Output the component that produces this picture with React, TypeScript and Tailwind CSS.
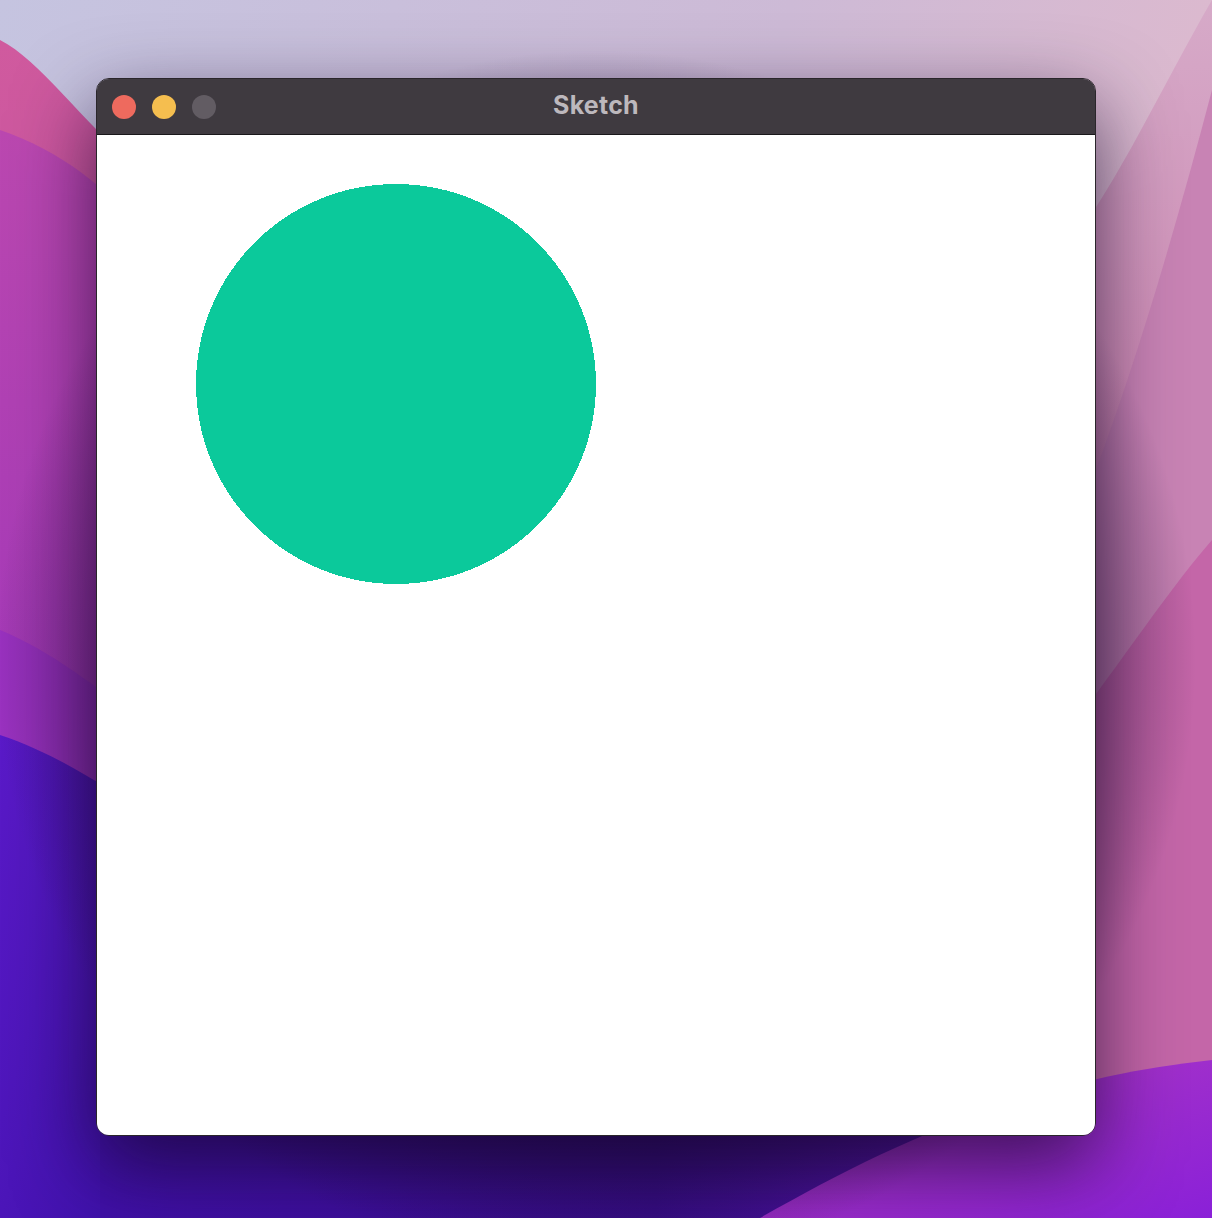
export default function App() {
  return (
    <div className="relative w-[1212px] h-[1218px] overflow-hidden bg-[#c6c3df]">
      {/* Wallpaper */}
      <svg className="absolute inset-0" width="1212" height="1218" viewBox="0 0 1212 1218">
        <defs>
          <linearGradient id="sky" x1="0" y1="0" x2="1" y2="0.3">
            <stop offset="0" stopColor="#c5c4e0" />
            <stop offset="0.6" stopColor="#cdbad6" />
            <stop offset="1" stopColor="#dfb9cd" />
          </linearGradient>
          <linearGradient id="left1" x1="0" y1="0" x2="0" y2="1">
            <stop offset="0" stopColor="#d05a9e" />
            <stop offset="1" stopColor="#b445ad" />
          </linearGradient>
          <linearGradient id="left2" x1="0" y1="0" x2="0" y2="1">
            <stop offset="0" stopColor="#bb48b0" />
            <stop offset="1" stopColor="#8f2cc0" />
          </linearGradient>
          <linearGradient id="left3" x1="0" y1="0" x2="1" y2="1">
            <stop offset="0" stopColor="#5a1ac8" />
            <stop offset="1" stopColor="#3c10a8" />
          </linearGradient>
          <linearGradient id="bottom" x1="0" y1="0" x2="1" y2="0">
            <stop offset="0" stopColor="#4010a8" />
            <stop offset="0.5" stopColor="#3a0e90" />
            <stop offset="1" stopColor="#6a18b8" />
          </linearGradient>
          <linearGradient id="right1" x1="0" y1="0" x2="0" y2="1">
            <stop offset="0" stopColor="#d6aac8" />
            <stop offset="0.5" stopColor="#cc7cac" />
            <stop offset="1" stopColor="#b847b6" />
          </linearGradient>
          <linearGradient id="right2" x1="0" y1="0" x2="1" y2="1">
            <stop offset="0" stopColor="#b23cc0" />
            <stop offset="1" stopColor="#8a20d8" />
          </linearGradient>
          <radialGradient id="shade" cx="0.5" cy="0.5" r="0.5">
            <stop offset="0.6" stopColor="#1a0830" stopOpacity="0.7" />
            <stop offset="1" stopColor="#1a0830" stopOpacity="0" />
          </radialGradient>
        </defs>
        <rect width="1212" height="1218" fill="url(#sky)" />
        <path d="M0 40 C40 60 80 120 140 170 L140 1218 L0 1218 Z" fill="url(#left1)" />
        <path d="M0 130 C60 150 110 190 140 230 L140 1218 L0 1218 Z" fill="url(#left2)" />
        <path d="M0 630 C50 650 100 690 140 720 L140 1218 L0 1218 Z" fill="#9a32c0" />
        <path d="M0 735 C60 755 110 790 140 810 L140 1218 L0 1218 Z" fill="url(#left3)" />
        <path d="M1212 0 L1212 1218 L1060 1218 L1060 260 C1120 180 1160 90 1212 0 Z" fill="url(#right1)" />
        <path d="M1212 90 C1170 250 1120 420 1060 560 L1060 1218 L1212 1218 Z" fill="#c883b4" />
        <path d="M1212 540 C1160 600 1110 680 1060 740 L1060 1218 L1212 1218 Z" fill="#c466a8" />
        <rect x="100" y="1100" width="1112" height="118" fill="url(#bottom)" />
        <path d="M1212 1060 L1212 1218 L760 1218 C880 1150 1020 1080 1212 1060 Z" fill="url(#right2)" />
        <ellipse cx="596" cy="660" rx="600" ry="610" fill="url(#shade)" />
      </svg>

      <div className="relative pl-[96px] pt-[78px]">
        <div className="w-[1000px] rounded-[13px] overflow-hidden border border-[#2a262b] shadow-[0_30px_80px_rgba(20,5,40,0.7)]">
          {/* Title bar */}
          <div className="relative h-[56px] bg-[#3f3a40] border-b border-[#1a181b] flex items-center pl-[15px] gap-[16px]">
            <div className="w-[24px] h-[24px] rounded-full bg-[#ee6a5e]" />
            <div className="w-[24px] h-[24px] rounded-full bg-[#f5be4f]" />
            <div className="w-[24px] h-[24px] rounded-full bg-[#625c63]" />
            <div className="absolute inset-0 flex items-center justify-center pointer-events-none">
              <span className="text-[#bdb8bd] text-[25px] font-bold font-['Inter','Liberation_Sans',sans-serif] leading-none tracking-[0.01em] -mt-[2px]">
                Sketch
              </span>
            </div>
          </div>
          {/* Canvas */}
          <div className="h-[1000px] bg-white">
            <svg width="1000" height="1000" viewBox="0 0 1000 1000" shapeRendering="crispEdges">
              <circle cx="299" cy="249" r="200" fill="#0bc99b" />
            </svg>
          </div>
        </div>
      </div>
    </div>
  )
}
